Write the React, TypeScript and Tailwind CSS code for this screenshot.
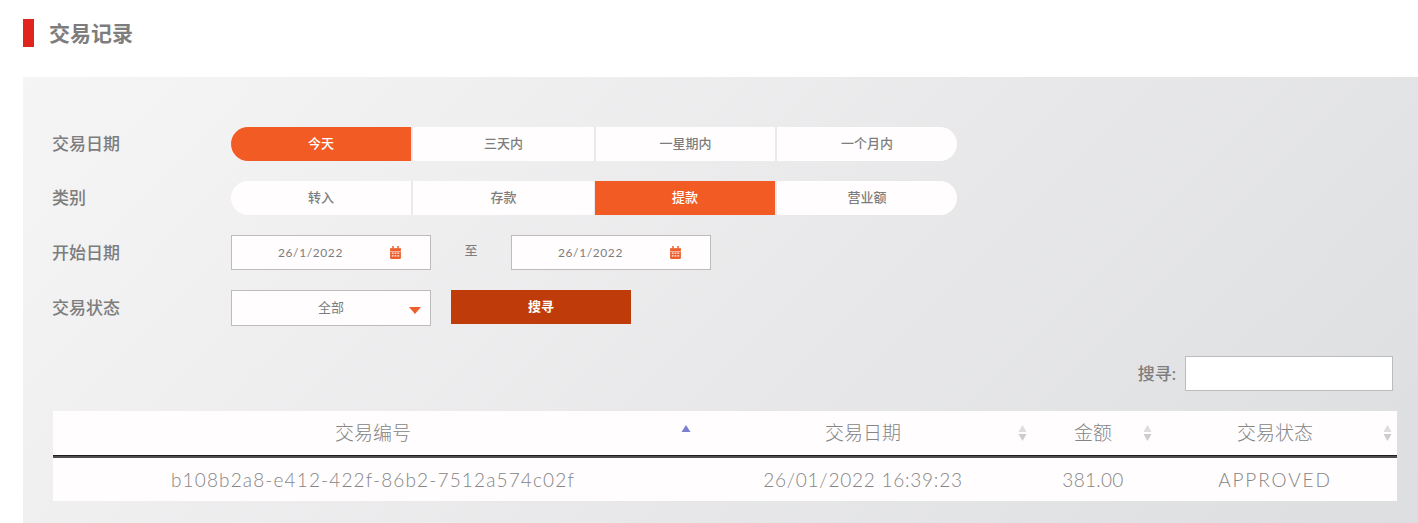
import { ReactNode } from 'react';

const font = { sans: "font-['Lato','Noto_Sans_CJK_SC',sans-serif]" };

const dateTabs = ['今天', '三天内', '一星期内', '一个月内'];
const typeTabs = ['转入', '存款', '提款', '营业额'];

const columns = [
  { title: '交易编号', sort: 'active', iconClass: 'right-[2px] top-[13px]' },
  { title: '交易日期', sort: 'none', iconClass: 'right-[6px] top-[14px]' },
  { title: '金额', sort: 'none', iconClass: 'right-[1px] top-[14px]' },
  { title: '交易状态', sort: 'none', iconClass: 'right-[5px] top-[14px]' },
];

const row = [
  { text: 'b108b2a8-e412-422f-86b2-7512a574c02f', className: 'tracking-[1.15px]' },
  { text: '26/01/2022 16:39:23', className: 'tracking-[0.76px]' },
  { text: '381.00', className: 'tracking-[0.3px]' },
  { text: 'APPROVED', className: 'tracking-[1.9px]' },
];

function Label({ children }: { children: ReactNode }) {
  return <div className="w-[179px] shrink-0 text-[17px] font-medium text-[#7d7d7d]">{children}</div>;
}

function Tabs({ items, active }: { items: string[]; active: number }) {
  return (
    <div className="grid h-[34px] w-[726px] grid-cols-[180px_183px_181px_182px] overflow-hidden rounded-full">
      {items.map((item, i) => (
        <div
          key={item}
          className={`flex items-center justify-center text-[13px] font-medium ${
            i === active ? 'bg-[#f35b25] font-bold text-white' : 'bg-[#fffdfe] text-[#7d7d7d]'
          } ${i > 0 ? (i === active ? 'border-l border-[#ebeaeb]' : 'border-l-2 border-[#ebeaeb]') : ''}`}
        >
          {item}
        </div>
      ))}
    </div>
  );
}

function CalendarIcon() {
  return (
    <svg viewBox="0 0 10 12" className="h-[13px] w-[11px]" fill="#ee5f2e">
      <rect x="2" y="0" width="1.4" height="2.5" />
      <rect x="6.6" y="0" width="1.4" height="2.5" />
      <path d="M0 2h10v2.6H0z" />
      <path
        fillRule="evenodd"
        d="M0 5h10v6a1 1 0 0 1-1 1H1a1 1 0 0 1-1-1zM1.6 6v1.2h1.6V6zm2.6 0v1.2h1.6V6zm2.6 0v1.2h1.6V6zM1.6 8.6v1.2h1.6V8.6zm2.6 0v1.2h1.6V8.6zm2.6 0v1.2h1.6V8.6z"
      />
    </svg>
  );
}

function DateField() {
  return (
    <div className="relative flex h-[35px] w-[200px] items-center border border-[#bcbcbc] bg-[#fffdfe] pl-[46px] text-[12px] tracking-[0.6px] text-[#7d7d7d]">
      26/1/2022
      <span className="absolute left-[158px] top-[10px] flex">
        <CalendarIcon />
      </span>
    </div>
  );
}

function SortIcon({ active, className }: { active: boolean; className: string }) {
  if (active) {
    return (
      <svg viewBox="0 0 10 14" className={`absolute h-[14px] w-[10px] ${className}`}>
        <path d="M5 1 9.5 8h-9z" fill="#7a7fd0" />
      </svg>
    );
  }
  return (
    <svg viewBox="0 0 9 16" className={`absolute h-[16px] w-[9px] ${className}`}>
      <path d="M4.5 0 8.5 7h-8z" fill="#dddddd" />
      <path d="M4.5 16 .5 9h8z" fill="#cccccc" />
    </svg>
  );
}

export default function App() {
  return (
    <div className={`h-[523px] w-[1418px] overflow-hidden bg-white ${font.sans}`}>
      <div className="flex h-[77px] items-start pl-[23px] pt-[19px]">
        <div className="h-[28px] w-[11px] bg-[#e0251f]" />
        <h1 className="ml-[15px] text-[21px] leading-[27px] font-bold text-[#7d7d7d]">交易记录</h1>
      </div>

      <div className="ml-[23px] h-[446px] bg-[linear-gradient(135deg,#f6f5f6,#dddee0)] pl-[29px] pr-[21px] pt-[50px]">
        <div className="flex items-center">
          <Label>交易日期</Label>
          <Tabs items={dateTabs} active={0} />
        </div>

        <div className="mt-[20px] flex items-center">
          <Label>类别</Label>
          <Tabs items={typeTabs} active={2} />
        </div>

        <div className="mt-[20px] flex items-center">
          <Label>开始日期</Label>
          <DateField />
          <div className="flex w-[80px] justify-center pb-[3px] text-[13px] text-[#7d7d7d]">至</div>
          <DateField />
        </div>

        <div className="mt-[20px] flex items-start">
          <div className="flex h-[36px] items-center">
            <Label>交易状态</Label>
          </div>
          <div className="relative flex h-[36px] w-[200px] items-center justify-center border border-[#bcbcbc] bg-[#fffdfe] text-[13px] text-[#7d7d7d]">
            全部
            <svg viewBox="0 0 12 7" className="absolute right-[9px] top-[16px] h-[7px] w-[12px]">
              <path d="M0 0h12L6 7z" fill="#ee5f2e" />
            </svg>
          </div>
          <button className="ml-[20px] h-[34px] w-[180px] bg-[#bf3c0a] text-[13px] font-bold text-white">搜寻</button>
        </div>

        <div className="mt-[30px] flex items-center justify-end pr-[4px]">
          <span className="text-[17px] font-medium text-[#7d7d7d]">搜寻:</span>
          <div className="ml-[9px] h-[35px] w-[208px] border border-[#bcbcbc] bg-white" />
        </div>

        <div className="ml-[1px] mt-[20px] w-[1344px]">
          <div className="grid h-[44px] grid-cols-[640px_340px_120px_244px] bg-[#fffdfe]">
            {columns.map((col) => (
              <div
                key={col.title}
                className="relative flex items-center justify-center text-[19px] font-light text-[#858585]"
              >
                {col.title}
                <SortIcon active={col.sort === 'active'} className={col.iconClass} />
              </div>
            ))}
          </div>
          <div className="h-[1px] bg-[#1f1f1f]" />
          <div className="h-[2px] bg-[#4f4f4f]" />
          <div className="grid h-[43px] grid-cols-[640px_340px_120px_244px] bg-[#fffdfe]">
            {row.map((cell) => (
              <div
                key={cell.text}
                className={`flex items-center justify-center pt-[1px] text-[19px] font-light text-[#858585] ${cell.className}`}
              >
                {cell.text}
              </div>
            ))}
          </div>
        </div>
      </div>
    </div>
  );
}
